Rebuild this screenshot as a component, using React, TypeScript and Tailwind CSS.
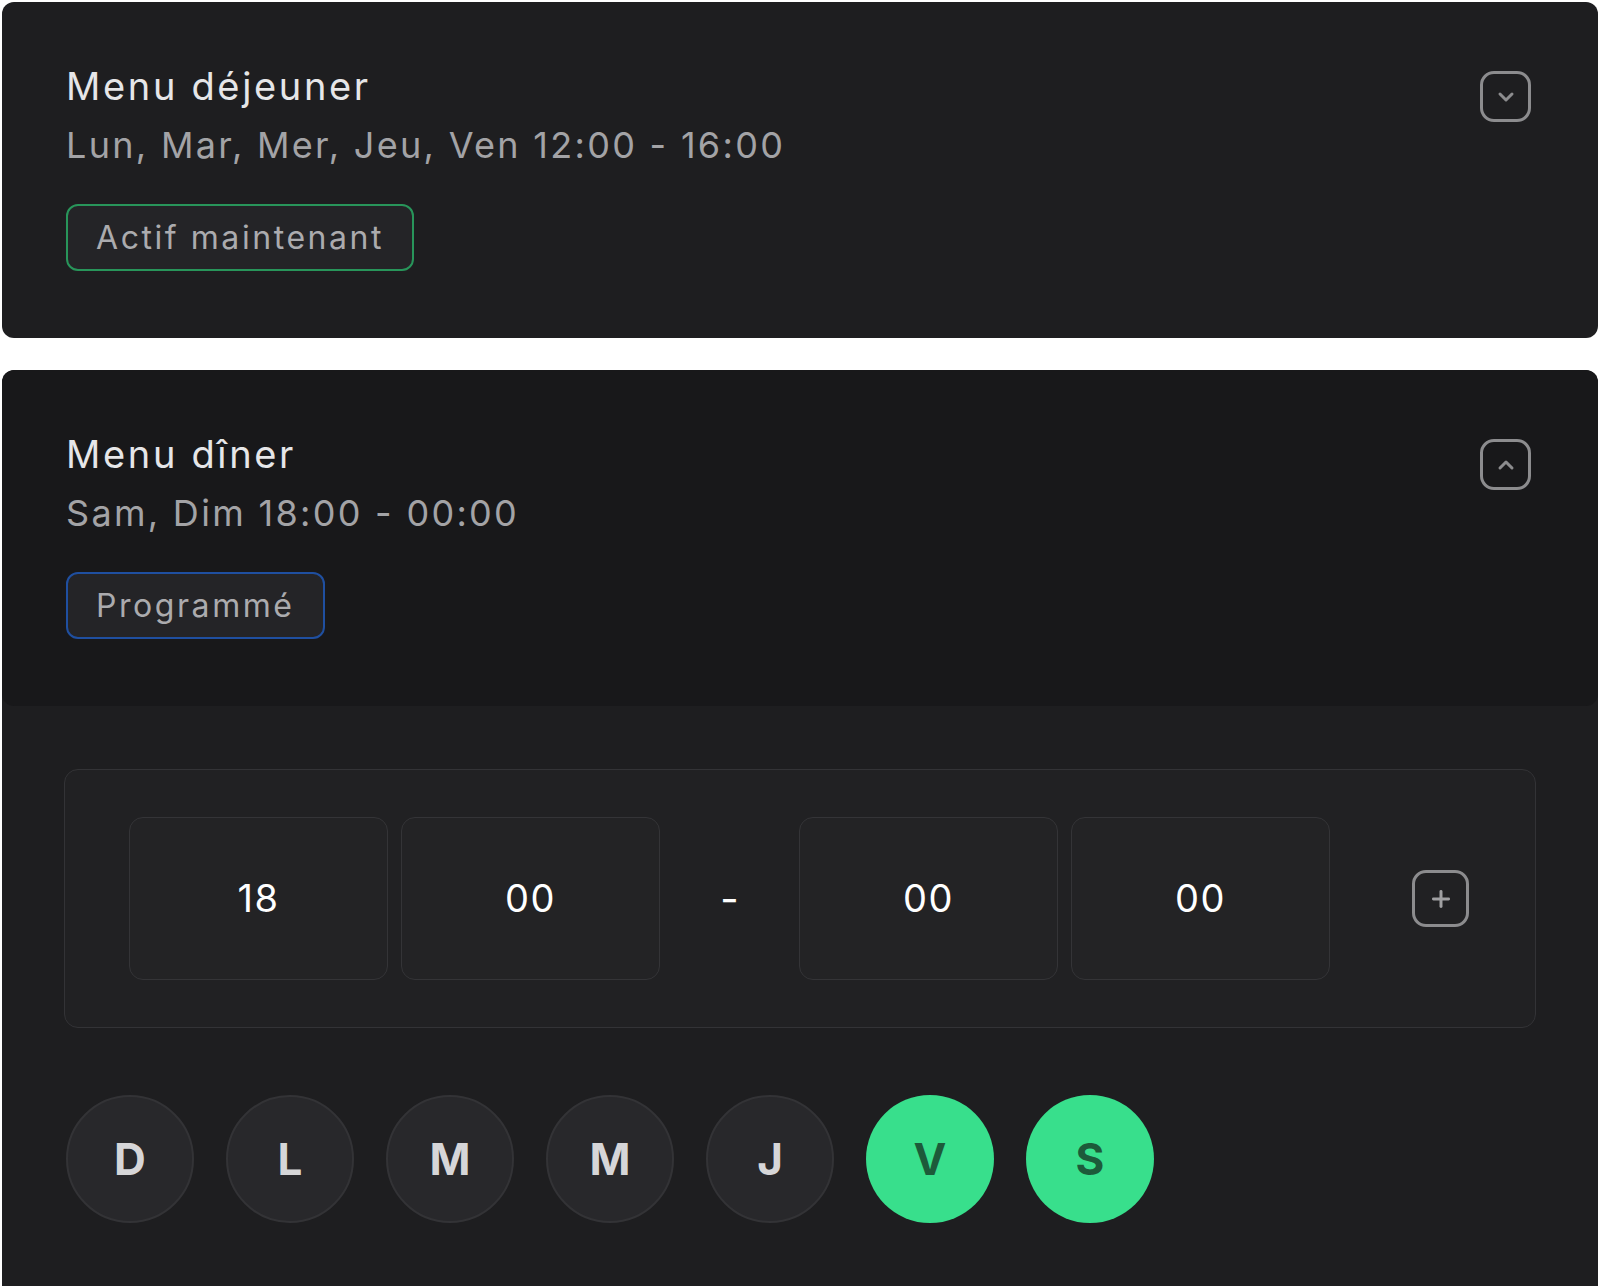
import { ChevronDown, ChevronUp, Plus } from "lucide-react";

const DAYS = [
  { key: "d", label: "D", on: false },
  { key: "l", label: "L", on: false },
  { key: "m1", label: "M", on: false },
  { key: "m2", label: "M", on: false },
  { key: "j", label: "J", on: false },
  { key: "v", label: "V", on: true },
  { key: "s", label: "S", on: true },
];

function ToggleButton({ open }: { open: boolean }) {
  return (
    <button
      aria-label={open ? "Réduire" : "Déplier"}
      className="grid h-[51px] w-[51px] shrink-0 place-items-center rounded-[14px] border-[3px] border-[#8c8c8e] text-[#8c8c8e]"
    >
      {open ? <ChevronUp size={24} strokeWidth={3} /> : <ChevronDown size={24} strokeWidth={3} />}
    </button>
  );
}

function MenuHeader({
  title,
  schedule,
  status,
  tone,
  open,
}: {
  title: string;
  schedule: string;
  status: string;
  tone: "green" | "blue";
  open: boolean;
}) {
  return (
    <div className="flex items-start justify-between pl-[64px] pr-[67px] pt-[59px]">
      <div className="flex flex-col">
        <h2 className="text-[38px] leading-[50px] tracking-[0.07em] text-[#e6e6e8]">{title}</h2>
        <p className="mt-[10px] text-[36px] leading-[48px] tracking-[0.064em] text-[#a3a3a6]">{schedule}</p>
        <div className="mt-[35px] flex">
          <span
            className={`flex h-[67px] items-center rounded-[12px] border-2 bg-[#242427] px-[28px] text-[32px] tracking-[0.08em] text-[#ababae] ${
              tone === "green" ? "border-[#28955a]" : "border-[#1f4fa0]"
            }`}
          >
            {status}
          </span>
        </div>
      </div>
      <div className="mt-[10px]">
        <ToggleButton open={open} />
      </div>
    </div>
  );
}

function TimeCell({ value }: { value: string }) {
  return (
    <div className="grid h-[163px] w-[259px] place-items-center rounded-[14px] border border-[#343437] bg-[#232325] text-[38px] tracking-[0.04em] text-white">
      {value}
    </div>
  );
}

export default function App() {
  return (
    <div
      className="min-h-[1286px] bg-white px-[2px] pt-[2px]"
      style={{ fontFamily: "Inter, 'Noto Sans', sans-serif" }}
    >
      <section className="h-[336px] rounded-[12px] bg-[#1e1e20]">
        <MenuHeader
          title="Menu déjeuner"
          schedule="Lun, Mar, Mer, Jeu, Ven 12:00 - 16:00"
          status="Actif maintenant"
          tone="green"
          open={false}
        />
      </section>

      <section className="mt-[32px] h-[916px] overflow-hidden rounded-t-[12px] bg-[#1e1e20]">
        <div className="h-[336px] rounded-[12px] bg-[#18181a]">
          <MenuHeader
            title="Menu dîner"
            schedule="Sam, Dim 18:00 - 00:00"
            status="Programmé"
            tone="blue"
            open={true}
          />
        </div>

        <div className="px-[62px] pt-[63px]">
          <div className="flex h-[259px] items-center rounded-[14px] border border-[#333336] bg-[#212123] pl-[64px]">
            <div className="flex gap-[13px]">
              <TimeCell value="18" />
              <TimeCell value="00" />
            </div>
            <div className="flex w-[139px] justify-center text-[40px] text-white">-</div>
            <div className="flex gap-[13px]">
              <TimeCell value="00" />
              <TimeCell value="00" />
            </div>
            <button
              aria-label="Ajouter"
              className="ml-[82px] grid h-[57px] w-[57px] place-items-center rounded-[14px] border-[3px] border-[#8c8c8e] text-[#a0a0a2]"
            >
              <Plus size={26} strokeWidth={2.75} />
            </button>
          </div>

          <div className="mt-[67px] flex gap-[32px] pl-[2px]">
            {DAYS.map((d) => (
              <button
                key={d.key}
                className={`grid h-[128px] w-[128px] place-items-center rounded-full text-[44px] font-bold ${
                  d.on
                    ? "bg-[#38df8c] text-[#1d5a3a]"
                    : "border-2 border-[#333336] bg-[#28282b] text-[#d6d6d8]"
                }`}
              >
                {d.label}
              </button>
            ))}
          </div>
        </div>
      </section>
    </div>
  );
}
